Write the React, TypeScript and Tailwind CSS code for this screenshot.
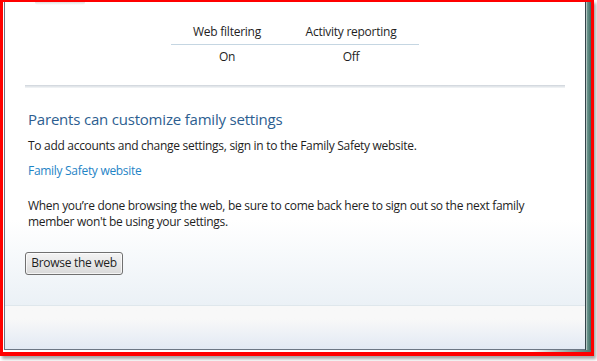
export default function App() {
  const font = { fontFamily: '"Open Sans", "Noto Sans", sans-serif' };
  return (
    <div className="w-[597px] h-[361px] bg-white overflow-hidden" style={font}>
      <div className="w-[594px] h-[356px] border-t-2 border-l-[3px] border-r-[3px] border-b-4 border-[#ff0000] shadow-[2px_3px_3px_rgba(0,0,0,0.35)] flex flex-col">
        <div className="flex flex-1 min-h-0">
          {/* left edge */}
          <div className="w-px bg-white" />
          <div className="w-px bg-[#687282]" />

          {/* content */}
          <div className="flex-1 flex flex-col min-w-0">
            <div className="flex-1 flex flex-col bg-gradient-to-b from-white from-[72%] to-[#ebf1f6]">
              <div className="h-[3px] ml-[30px] w-[50px] rounded-b-full bg-gradient-to-b from-[#dedede] to-white" />

              {/* settings table */}
              <div className="ml-[166px] w-[248px] mt-[19px] text-[12px] tracking-[-0.25px] text-[#1e1e1e]">
                <div className="flex leading-[16px] pb-[4px] border-b border-[#c5d6e2]">
                  <div className="w-[112px] text-center">Web filtering</div>
                  <div className="w-[136px] text-center">Activity reporting</div>
                </div>
                <div className="flex leading-[16px] mt-[4px]">
                  <div className="w-[112px] text-center">On</div>
                  <div className="w-[136px] text-center">Off</div>
                </div>
              </div>

              <div className="ml-[20px] w-[540px] h-[3px] mt-[20px] bg-gradient-to-b from-[#cdd3da] via-[#e2e6ea] to-[#f4f6f8]" />

              <div className="pl-[23px] mt-[20px] text-[15px] tracking-[-0.2px] leading-[22px] text-[#2d5e90]">
                Parents can customize family settings
              </div>
              <div className="pl-[23px] mt-[8px] text-[12px] tracking-[-0.3px] leading-[16px] text-[#1e1e1e]">
                To add accounts and change settings, sign in to the Family Safety website.
              </div>
              <div className="pl-[23px] mt-[9px] text-[12px] tracking-[-0.3px] leading-[16px] text-[#1f84c6]">
                Family Safety website
              </div>
              <div className="pl-[23px] mt-[19px] text-[12px] tracking-[-0.3px] leading-[16px] text-[#1e1e1e]">
                <div>When you’re done browsing the web, be sure to come back here to sign out so the next family</div>
                <div>member won't be using your settings.</div>
              </div>
              <div className="pl-[20px] mt-[19px]">
                <button className="w-[98px] h-[23px] rounded-[3px] border border-[#707070] bg-gradient-to-b from-[#f3f3f3] via-[#e8e8e8] to-[#d9d9d9] text-[12px] tracking-[-0.3px] leading-[16px] text-[#1e1e1e] shadow-[inset_0_0_0_1px_rgba(255,255,255,0.7)]">
                  Browse the web
                </button>
              </div>
              <div className="h-[30px]" />
            </div>

            {/* footer band */}
            <div className="h-px bg-[#bccdd6]" />
            <div className="h-px bg-[#dfe7ec]" />
            <div className="h-[45px] bg-gradient-to-b from-[#f8f8f8] from-[30%] to-[#e2e9f4]" />
            <div className="h-px bg-[#6c7684]" />
          </div>

          {/* right window frame */}
          <div className="w-px bg-[#34444a]" />
          <div className="w-px bg-[#b4c4c2]" />
          <div className="w-[4px] bg-gradient-to-r from-[#6f998f] to-[#3d6762]" />
        </div>
        <div className="h-[2px] bg-gradient-to-r from-white from-[90%] to-[#4f7770]" />
      </div>
    </div>
  );
}
